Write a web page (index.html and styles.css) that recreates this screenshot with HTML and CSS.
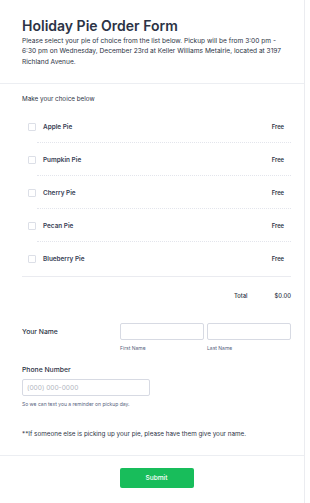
FILE: index.html
```html
<!DOCTYPE html>
<html lang="en">

<head>
    <meta charset="UTF-8">
    <meta name="viewport" content="width=device-width, initial-scale=1.0">
    <title>Holiday Pie Order Form</title>
    <link rel="stylesheet" href="styles.css">
</head>

<body>
    <div class="form">
        <!-- header -->
        <div class="form-header">
            <h1 class="form-title">Holiday Pie Order Form</h1>
            <p class="form-desc">Please select your pie of choice from the list below. Pickup will be from 3:00 pm - 6:30 pm on Wednesday, December 23rd at Keller Williams Metairie, located at 3197 Richland Avenue.</p>
        </div>

        <div class="form-body">
            <div class="list-label">Make your choice below</div>
            <!-- products -->
            <ul class="choices">
                <li class="choice"><span class="check"></span><span class="choice-name">Apple Pie</span><span class="price">Free</span></li>
                <li class="choice"><span class="check"></span><span class="choice-name">Pumpkin Pie</span><span class="price">Free</span></li>
                <li class="choice"><span class="check"></span><span class="choice-name">Cherry Pie</span><span class="price">Free</span></li>
                <li class="choice"><span class="check"></span><span class="choice-name">Pecan Pie</span><span class="price">Free</span></li>
                <li class="choice"><span class="check"></span><span class="choice-name">Blueberry Pie</span><span class="price">Free</span></li>
            </ul>
            <div class="total"><span>Total</span><span>$0.00</span></div>

            <!-- name -->
            <div class="name-row">
                <label class="field-label name-label">Your Name</label>
                <div class="name-fields">
                    <div class="name-field">
                        <input type="text" class="text-input">
                        <div class="sublabel">First Name</div>
                    </div>
                    <div class="name-field">
                        <input type="text" class="text-input">
                        <div class="sublabel">Last Name</div>
                    </div>
                </div>
            </div>

            <!-- phone -->
            <div class="phone-row">
                <label class="field-label" for="phone">Phone Number</label>
                <input type="text" id="phone" class="text-input phone-input" placeholder="(000) 000-0000">
                <div class="sublabel">So we can text you a reminder on pickup day.</div>
            </div>

            <p class="note">**If someone else is picking up your pie, please have them give your name.</p>
        </div>

        <div class="form-footer">
            <a href="javascript:void(0);" class="submit">Submit</a>
        </div>
    </div>
</body>

</html>
```

FILE: styles.css
```css
* {
    margin: 0;
    padding: 0;
    box-sizing: border-box;
}

body {
    font-family: Inter, "Liberation Sans", sans-serif;
    color: #2c3345;
    background: #ffffff;
}

.form {
    width: 305px;
    min-height: 503px;
    border-right: 1px solid #ebecf0;
}

.form-header {
    padding: 17px 13px 16px 22px;
    border-bottom: 1px solid #eceef2;
}

.form-title {
    font-size: 14px;
    line-height: 17px;
    font-weight: 600;
}

.form-desc {
    margin-top: 1.5px;
    font-size: 6.6px;
    line-height: 10.5px;
}

.form-body {
    padding: 10px 13px 16px 22px;
    border-bottom: 1px solid #eceef2;
}

.list-label {
    font-size: 6.3px;
    line-height: 10px;
}

.choices {
    list-style: none;
    margin-top: 6px;
    padding-bottom: 1px;
    border-bottom: 1px solid #eaebf0;
}

.choice {
    position: relative;
    display: flex;
    align-items: center;
    height: 33px;
    padding: 0 7px 0 6px;
}

/* dotted line between products */
.choice::after {
    content: "";
    position: absolute;
    left: 15px;
    right: 0;
    bottom: 0;
    border-bottom: 1px dotted #e3e5ec;
}

.choice:last-child::after {
    display: none;
}

.check {
    width: 8px;
    height: 8px;
    border: 1px solid #dcdfe7;
    border-radius: 1px;
}

.choice-name {
    margin-left: 7px;
    font-size: 6.4px;
    font-weight: 600;
    color: #3a4256;
}

.price {
    margin-left: auto;
    font-size: 5.8px;
    font-weight: 600;
}

.total {
    display: flex;
    justify-content: flex-end;
    gap: 27px;
    margin-top: 14px;
    font-size: 5.8px;
    line-height: 10px;
    font-weight: 500;
}

.name-row {
    display: flex;
    margin-top: 22px;
}

.field-label {
    display: block;
    font-size: 6.8px;
    line-height: 17px;
    font-weight: 500;
}

.name-label {
    width: 98px;
}

.name-fields {
    flex: 1;
    display: flex;
    gap: 3px;
}

.name-field {
    flex: 1;
}

.text-input {
    display: block;
    width: 100%;
    height: 17px;
    border: 1px solid #d7dae3;
    border-radius: 2px;
    padding: 0 4px;
    font-family: Inter, "Liberation Sans", sans-serif;
    font-size: 6.6px;
    outline: none;
}

.text-input::placeholder {
    color: #b3b7c1;
}

.sublabel {
    margin-top: 4px;
    font-size: 5px;
    line-height: 8px;
    color: #57647e;
}

.phone-row {
    margin-top: 13px;
}

.phone-row .field-label {
    line-height: 10px;
    margin-bottom: 4px;
}

.phone-input {
    width: 128px;
}

.note {
    margin-top: 21px;
    font-size: 6.3px;
    line-height: 10px;
}

.form-footer {
    display: flex;
    justify-content: center;
    padding: 12px 13px 0 22px;
}

.submit {
    display: block;
    width: 74px;
    height: 20px;
    line-height: 20px;
    text-align: center;
    background: #18bd5b;
    border-radius: 2px;
    color: #ffffff;
    font-size: 6.6px;
    font-weight: 500;
    text-decoration: none;
}
```
